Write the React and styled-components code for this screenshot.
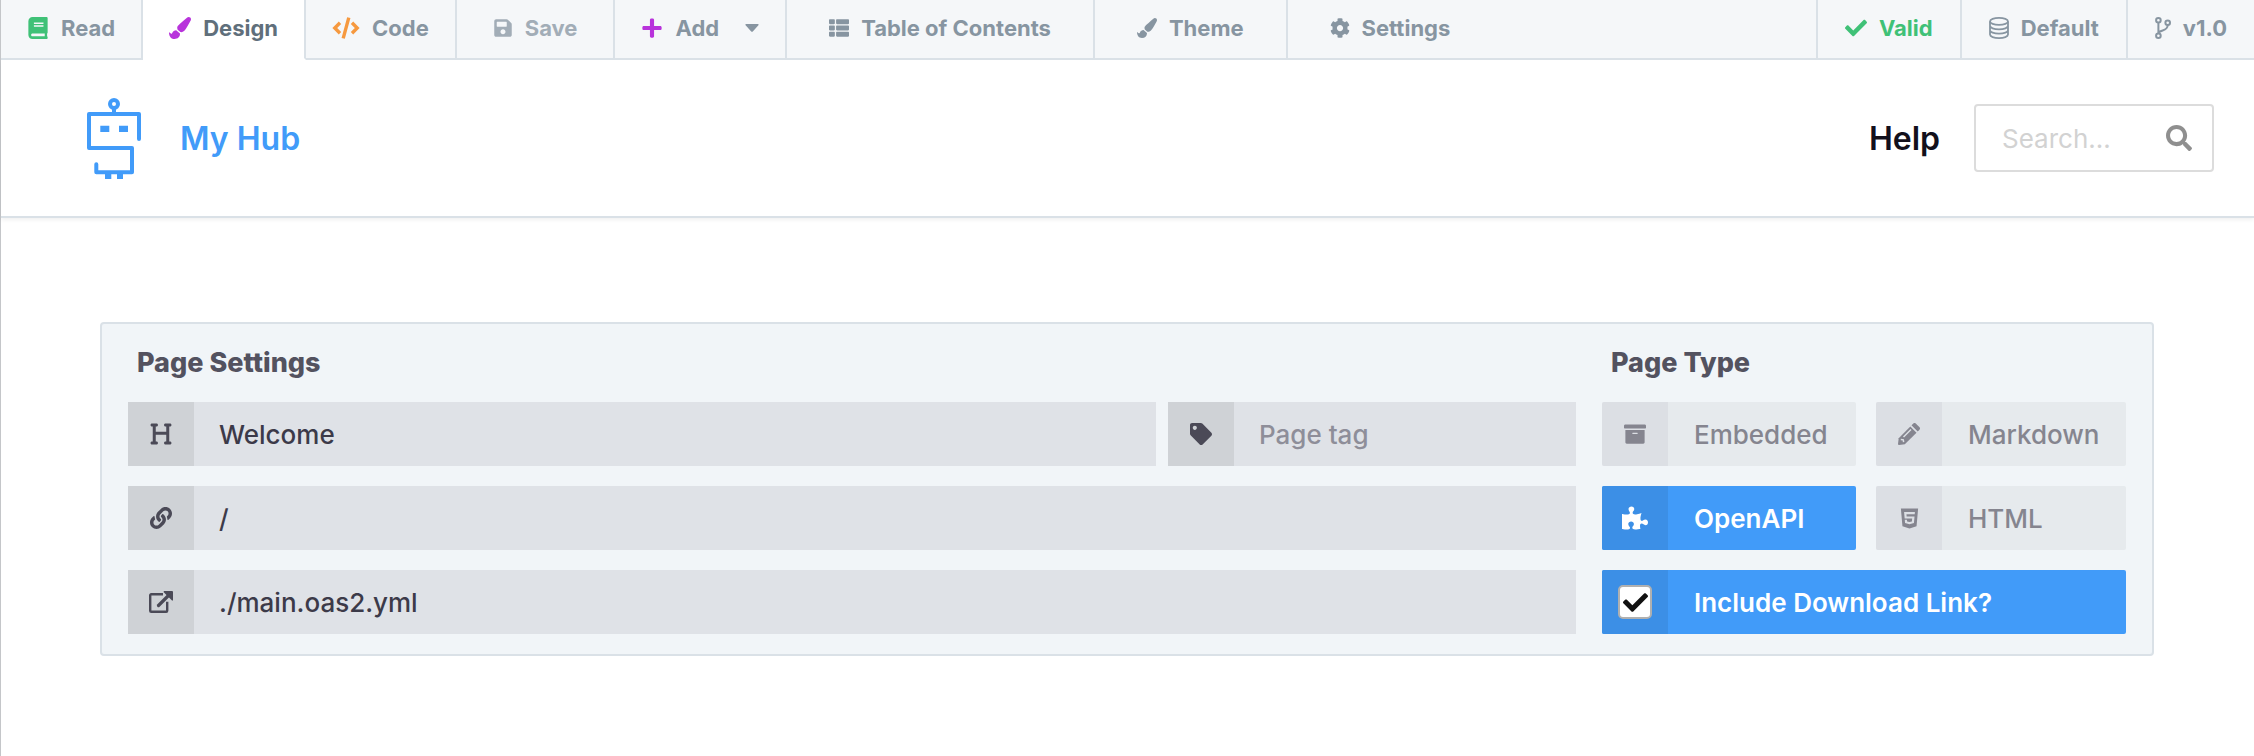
import React from "react";
import styled, { createGlobalStyle } from "styled-components";
import {
  FaBook, FaPaintBrush, FaSave, FaPlus, FaThList, FaCog, FaCheck,
  FaSearch, FaTag, FaArchive, FaPuzzlePiece, FaHtml5, FaLink,
} from "react-icons/fa";
import { FaHeading } from "react-icons/fa6";

const Global = createGlobalStyle`
  *, *::before, *::after { box-sizing: border-box; }
  body { margin: 0; background: #fff; font-family: Inter, "Liberation Sans", sans-serif; }
  button, input { font: inherit; color: inherit; margin: 0; }
`;

const Page = styled.div`
  min-height: 100vh;
  border-left: 1px solid #c4c6c9;
`;

const Toolbar = styled.nav`
  display: flex;
  height: 60px;
  background: #f5f7f9;
`;

const Tab = styled.button`
  display: flex;
  align-items: center;
  gap: 12px;
  padding: 0 ${(p) => p.$pad || 26}px 2px;
  border: 0 solid #dae1e7;
  border-width: ${(p) => (p.$end ? "0 0 2px 2px" : p.$last ? "0 0 2px" : "0 2px 2px 0")};
  border-bottom-color: ${(p) => (p.$active ? "#fff" : "#dae1e7")};
  background: ${(p) => (p.$active ? "#fff" : "transparent")};
  color: ${(p) => p.$color || "#8795a1"};
  font-size: 22px;
  font-weight: 700;
  white-space: nowrap;

  svg { flex: none; }
  svg:first-child { color: ${(p) => p.$icon || "inherit"}; }
  svg ~ svg { margin-left: 14px; }
`;

const Spacer = styled.div`
  flex: 1;
  border-bottom: 2px solid #dae1e7;
`;

const Header = styled.header`
  display: flex;
  align-items: center;
  height: 158px;
  padding: 0 40px 0 85px;
  border-bottom: 2px solid #dae1e7;
  box-shadow: 0 2px 4px rgba(0, 0, 0, 0.06);
`;

const Brand = styled.a`
  display: flex;
  align-items: center;
  gap: 38px;
  margin-right: auto;
  color: #419bf9;
  font-size: 32px;
  font-weight: 600;
  text-decoration: none;
`;

const HelpLink = styled.a`
  margin-right: 34px;
  color: #12101c;
  font-size: 32px;
  font-weight: 600;
  text-decoration: none;
`;

const SearchBox = styled.label`
  display: flex;
  align-items: center;
  width: 240px;
  height: 68px;
  padding: 0 20px 0 26px;
  border: 2px solid #dcdcdc;
  border-radius: 4px;
  color: #8f8f8f;

  input {
    flex: 1;
    min-width: 0;
    padding: 0;
    border: 0;
    outline: 0;
    background: none;
    font-size: 26px;
  }

  input::placeholder { color: #d2d2d2; opacity: 1; }
`;

const Panel = styled.form`
  display: flex;
  gap: 26px;
  margin: 104px 100px 0 99px;
  padding: 18px 26px 20px;
  border: 2px solid #dae1e7;
  border-radius: 4px;
  background: #f1f5f8;
`;

const Column = styled.section`
  flex: ${(p) => (p.$width ? `0 0 ${p.$width}px` : "1")};
  min-width: 0;
`;

const Title = styled.h2`
  margin: 0 0 18px;
  padding-left: 9px;
  color: #53525f;
  font-size: 27px;
  line-height: 42px;
  font-weight: 800;
`;

const Rows = styled.div`
  display: grid;
  gap: 20px;
`;

const Row = styled.div`
  display: grid;
  grid-template-columns: ${(p) => p.$columns};
  gap: 20px ${(p) => p.$gap}px;
`;

const Field = styled.label`
  display: flex;
  height: 64px;
  background: #dfe2e7;
  color: #3c3a49;
  font-size: 26px;
  font-weight: 500;

  input {
    flex: 1;
    min-width: 0;
    padding: 0 25px;
    border: 0;
    outline: 0;
    background: none;
  }

  input::placeholder { color: #8e8e99; opacity: 1; }
`;

const FieldIcon = styled.span`
  display: flex;
  align-items: center;
  justify-content: center;
  flex: 0 0 66px;
  background: #cfd2d6;
  color: #4b4a57;
`;

const Choice = styled.label`
  position: relative;
  display: flex;
  height: 64px;
  border-radius: 2px;
  overflow: hidden;
  background: ${(p) => (p.$active ? "#419bf9" : "#e6eaed")};
  color: ${(p) => (p.$active ? "#fff" : "#85858f")};
  font-size: 26px;
  font-weight: ${(p) => (p.$active ? 600 : 500)};
  white-space: nowrap;
`;

const HiddenRadio = styled.input`
  position: absolute;
  inset: 0;
  opacity: 0;
`;

const ChoiceIcon = styled.span`
  display: flex;
  align-items: center;
  justify-content: center;
  flex: 0 0 66px;
  background: ${(p) => (p.$active ? "#3c8fe6" : "#dcdfe4")};
`;

const ChoiceText = styled.span`
  align-self: center;
  padding-left: 26px;
`;

const TickBox = styled.span`
  display: grid;
  color: #111;

  input, svg { grid-area: 1 / 1; }
  svg { place-self: center; pointer-events: none; visibility: hidden; }
  input:checked + svg { visibility: visible; }
`;

const Tick = styled.input`
  appearance: none;
  width: 34px;
  height: 34px;
  border: 2px solid #b0b0b0;
  border-radius: 5px;
  background: #fff;
`;

const Robot = () => (
  <svg width="56" height="82" viewBox="0 0 56 82" fill="none" stroke="#419bf9" strokeWidth="4" strokeLinecap="round" strokeLinejoin="round">
    <circle cx="28" cy="7" r="4" />
    <path d="M28 12v4" />
    <path d="M53 42V17H3v34h43v24.3H10.3v-8" />
    <g fill="#419bf9" stroke="none">
      <path d="M14.3 28.7h9V35h-9zM33 28.7h9V35h-9zM19 76h6.3v6H19zM31 76h6v6h-6z" />
    </g>
  </svg>
);

const CodeIcon = () => (
  <svg width="28" height="22" viewBox="0 0 28 22" fill="none" stroke="currentColor" strokeWidth="3.4">
    <path d="M8 5.8 2.8 11 8 16.2M20 5.8l5.2 5.2-5.2 5.2M16.8.6l-5.6 20.8" />
  </svg>
);

const CaretIcon = () => (
  <svg width="14" height="8" viewBox="0 0 14 8" fill="currentColor">
    <path d="M1.200 0h11.600c.9 0 1.100.8.600 1.300L7.800 7.400a1.100 1.100 0 0 1-1.600 0L.6 1.300C.1.800.3 0 1.200 0z" />
  </svg>
);

const DatabaseIcon = () => (
  <svg width="20" height="22" viewBox="0 0 20 22" fill="none" stroke="currentColor" strokeWidth="1.8">
    <ellipse cx="10" cy="4.4" rx="9" ry="3.5" />
    <path d="M1 4.4v13.2M19 4.4v13.2M1 8.800c0 2 4 3.500 9 3.500s9-1.500 9-3.500M1 13.200c0 2 4 3.500 9 3.500s9-1.500 9-3.500M1 17.600c0 2 4 3.500 9 3.500s9-1.500 9-3.500" />
  </svg>
);

const BranchIcon = () => (
  <svg width="16" height="22" viewBox="0 0 16 22" fill="none" stroke="currentColor" strokeWidth="2">
    <circle cx="3.400" cy="3.300" r="2.300" />
    <circle cx="3.400" cy="18.700" r="2.300" />
    <circle cx="12.700" cy="5.800" r="2.300" />
    <path d="M3.400 5.600v10.800M12.700 8c0 6-6 4.500-9.300 7.500" />
  </svg>
);

const ExternalIcon = () => (
  <svg width="24" height="22" viewBox="0 0 24 22" fill="none" stroke="currentColor" strokeWidth="2.400">
    <path d="M14 3.200H2.200a1 1 0 0 0-1 1v15.600a1 1 0 0 0 1 1h15a1 1 0 0 0 1-1v-9" />
    <path d="M9.500 14.500 20.500 3.500" strokeWidth="3.200" strokeLinecap="round" />
    <path d="M15 0h8a1 1 0 0 1 1 1v8.500h-1L14.500 1z" fill="currentColor" stroke="none" />
  </svg>
);

const PencilIcon = () => (
  <svg width="22" height="22" viewBox="0 0 22 22" fill="currentColor">
    <path d="M12.300 3.500 18.500 9.700 6.800 21.300 1 22a1 1 0 0 1-1-1L.7 15.200z" />
    <path d="m13.500 2.300 1.600-1.600a2 2 0 0 1 2.900 0l3.300 3.300a2 2 0 0 1 0 2.900l-1.600 1.600z" />
    <path d="M5.500 14 13 6.500M2.800 16.500l2.500.3.300 2.400" fill="none" stroke="#dcdfe4" strokeWidth="1.500" />
  </svg>
);

const TypeChoice = ({ icon, label, active }) => (
  <Choice $active={active}>
    <HiddenRadio type="radio" name="page-type" defaultChecked={active} />
    <ChoiceIcon $active={active}>{icon}</ChoiceIcon>
    <ChoiceText>{label}</ChoiceText>
  </Choice>
);

export default function App() {
  return (
    <Page>
      <Global />
      <Toolbar>
        <Tab $icon="#3fc177"><FaBook size={22} />Read</Tab>
        <Tab $active $color="#606f7b" $icon="#b833db"><FaPaintBrush size={22} />Design</Tab>
        <Tab $icon="#f6993f"><CodeIcon />Code</Tab>
        <Tab $pad={36} $color="#a2adb7"><FaSave size={20} />Save</Tab>
        <Tab $icon="#b833db"><FaPlus size={22} />Add<CaretIcon /></Tab>
        <Tab $pad={42}><FaThList size={20} />Table of Contents</Tab>
        <Tab $pad={42}><FaPaintBrush size={20} />Theme</Tab>
        <Tab $pad={42} $last><FaCog size={20} />Settings</Tab>
        <Spacer />
        <Tab $end $pad={27} $color="#3fc177"><FaCheck size={22} />Valid</Tab>
        <Tab $end $pad={27}><DatabaseIcon />Default</Tab>
        <Tab $end $pad={27}><BranchIcon />v1.0</Tab>
      </Toolbar>
      <Header>
        <Brand href="#"><Robot />My Hub</Brand>
        <HelpLink href="#">Help</HelpLink>
        <SearchBox>
          <input aria-label="Search" placeholder="Search..." />
          <FaSearch size={26} />
        </SearchBox>
      </Header>
      <Panel>
        <Column>
          <Title>Page Settings</Title>
          <Rows>
            <Row $columns="1fr 408px" $gap={12}>
              <Field>
                <FieldIcon><FaHeading size={24} /></FieldIcon>
                <input aria-label="Title" defaultValue="Welcome" />
              </Field>
              <Field>
                <FieldIcon><FaTag size={22} /></FieldIcon>
                <input aria-label="Page tag" placeholder="Page tag" />
              </Field>
            </Row>
            <Field>
              <FieldIcon><FaLink size={22} /></FieldIcon>
              <input aria-label="Path" defaultValue="/" />
            </Field>
            <Field>
              <FieldIcon><ExternalIcon /></FieldIcon>
              <input aria-label="Source" defaultValue="./main.oas2.yml" />
            </Field>
          </Rows>
        </Column>
        <Column $width={524}>
          <Title>Page Type</Title>
          <Rows>
            <Row $columns="254fr 250fr" $gap={20}>
              <TypeChoice icon={<FaArchive size={22} />} label="Embedded" />
              <TypeChoice icon={<PencilIcon />} label="Markdown" />
              <TypeChoice icon={<FaPuzzlePiece size={26} />} label="OpenAPI" active />
              <TypeChoice icon={<FaHtml5 size={23} />} label="HTML" />
            </Row>
            <Choice $active>
              <ChoiceIcon $active>
                <TickBox>
                  <Tick type="checkbox" defaultChecked />
                  <FaCheck size={25} />
                </TickBox>
              </ChoiceIcon>
              <ChoiceText>Include Download Link?</ChoiceText>
            </Choice>
          </Rows>
        </Column>
      </Panel>
    </Page>
  );
}
